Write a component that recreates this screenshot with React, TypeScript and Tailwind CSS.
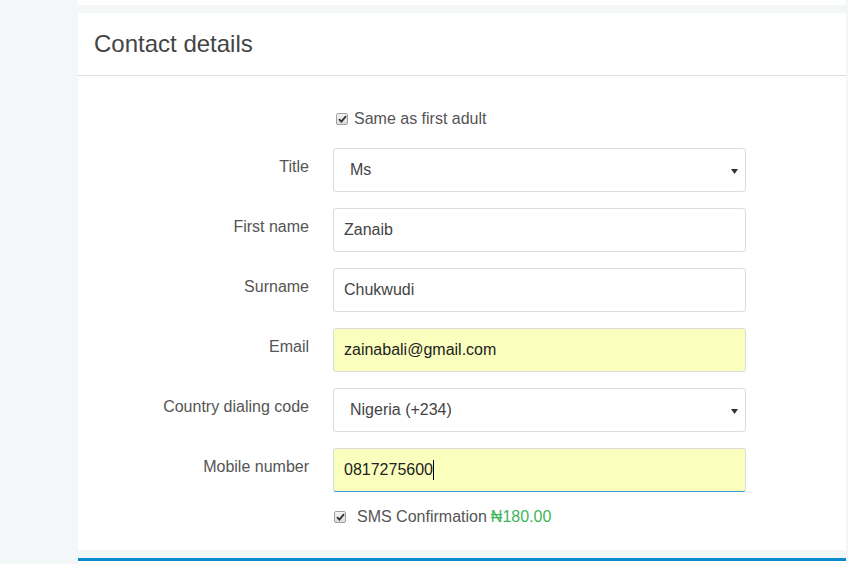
import React from "react";

function Check({ className = "" }: { className?: string }) {
  return (
    <span className={"inline-flex items-center justify-center w-[12px] h-[12px] rounded-[2px] border border-[#a0a0a0] bg-gradient-to-b from-[#f4f4f4] to-[#dcdcdc] " + className}>
      <svg width="9" height="8" viewBox="0 0 9 8">
        <path d="M1 4.2 L3.4 6.6 L8 1.2" fill="none" stroke="#333" strokeWidth="1.8" />
      </svg>
    </span>
  );
}

function Arrow() {
  return (
    <svg width="7" height="5" viewBox="0 0 7 5" className="absolute right-[7px] top-[20px]">
      <path d="M0 0 H7 L3.5 5 Z" fill="#333" />
    </svg>
  );
}

function Row({ label, children }: { label: string; children: React.ReactNode }) {
  return (
    <div className="flex items-start">
      <div className="w-[231px] text-right pt-[8px] leading-[22px] text-[#555]">{label}</div>
      <div className="ml-[24px] w-[413px]">{children}</div>
    </div>
  );
}

function Field({ value, autofill = false, select = false, focus = false, padLeft = "pl-[10px]" }: { value: React.ReactNode; autofill?: boolean; select?: boolean; focus?: boolean; padLeft?: string }) {
  return (
    <div
      className={
        "relative h-[44px] rounded-[3px] border flex items-center " +
        padLeft +
        " " +
        (autofill ? "bg-[#faffbd] text-[#222] " : "bg-white text-[#444] ") +
        (focus ? "border-[#dcdcdc] border-b-[#2e9fd8]" : "border-[#dcdcdc]")
      }
    >
      {value}
      {select && <Arrow />}
    </div>
  );
}

export default function App() {
  return (
    <div
      className="w-[848px] h-[564px] overflow-hidden bg-[#f3f7f8] text-[16px]"
      style={{ fontFamily: '"Liberation Sans", Arial, sans-serif' }}
    >
      <div className="ml-[78px] w-[768px]">
        <div className="h-[5px] bg-white" />
        <div className="mt-[8px] bg-white h-[537px]">
          <div className="h-[63px] border-b border-[#dedede] flex items-center px-[16px]">
            <h2 className="text-[24px] text-[#444] leading-none">Contact details</h2>
          </div>
          <div className="pt-[32px]">
            <div className="flex items-center ml-[258px] h-[22px] text-[#555]">
              <Check />
              <span className="ml-[6px]">Same as first adult</span>
            </div>
            <div className="mt-[18px] flex flex-col gap-[16px]">
              <Row label="Title">
                <Field value="Ms" select padLeft="pl-[16px]" />
              </Row>
              <Row label="First name">
                <Field value="Zanaib" />
              </Row>
              <Row label="Surname">
                <Field value="Chukwudi" />
              </Row>
              <Row label="Email">
                <Field value="zainabali@gmail.com" autofill />
              </Row>
              <Row label="Country dialing code">
                <Field value="Nigeria (+234)" select padLeft="pl-[16px]" />
              </Row>
              <Row label="Mobile number">
                <Field
                  value={
                    <>
                      <span>0817275600</span>
                      <span className="inline-block w-[1px] h-[20px] bg-black" />
                    </>
                  }
                  autofill
                  focus
                />
              </Row>
            </div>
            <div className="flex items-center ml-[256px] mt-[14px] h-[22px] text-[#555]">
              <Check />
              <span className="ml-[11px]">SMS Confirmation</span>
              <span className="ml-[4px] text-[#3cb55c]">₦180.00</span>
            </div>
          </div>
        </div>
        <div className="mt-[8px] h-[20px] bg-white border-t-[3px] border-[#0b8bcb]" />
      </div>
    </div>
  );
}
